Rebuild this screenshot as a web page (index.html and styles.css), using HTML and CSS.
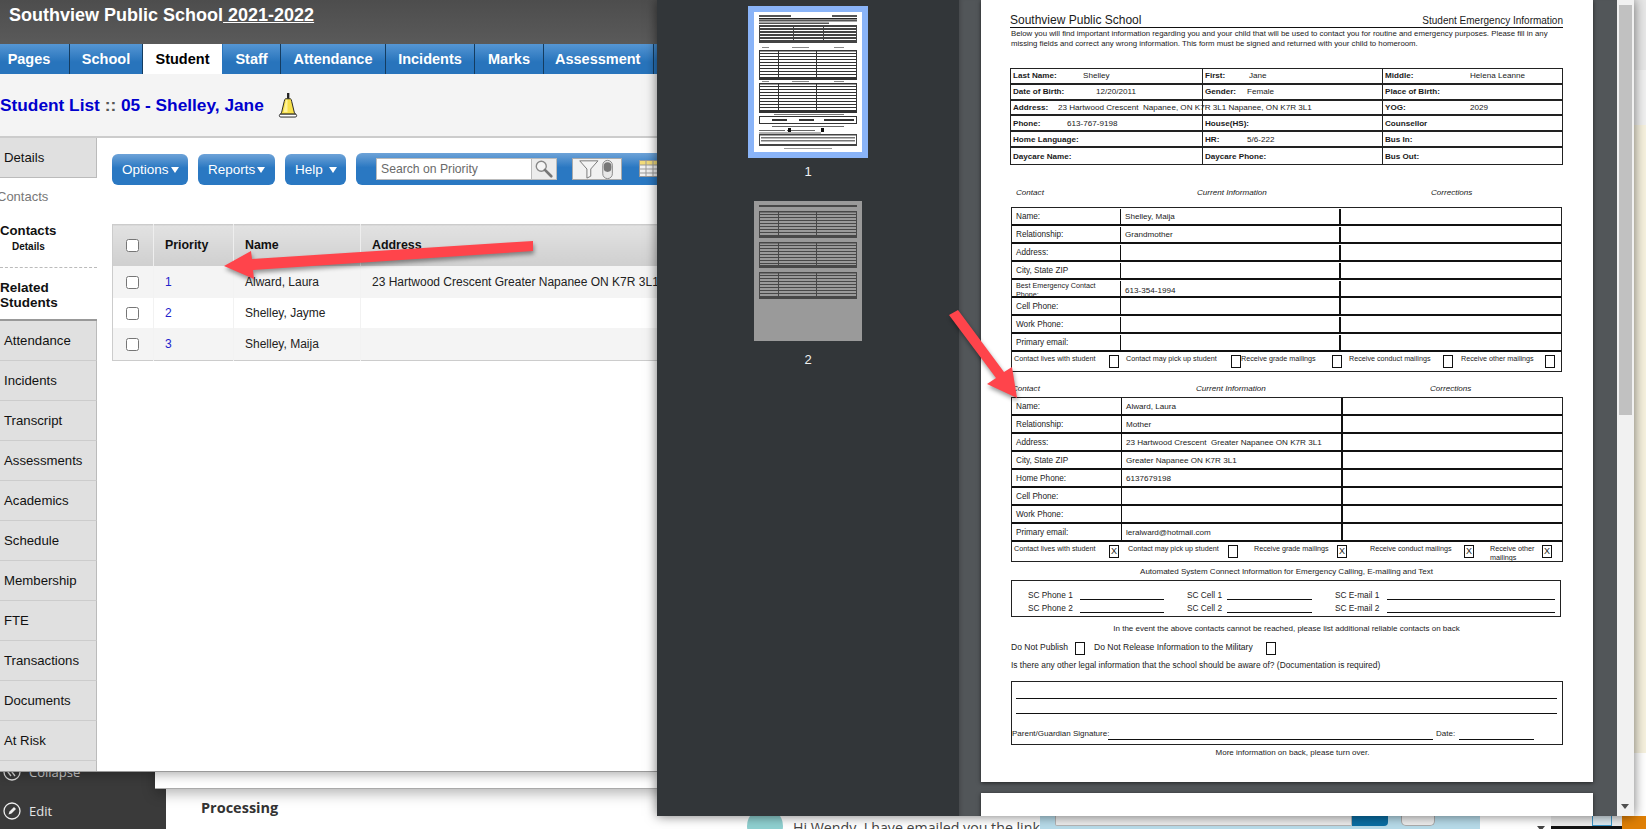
FILE: index.html
```html
<!DOCTYPE html>
<html lang="en">
<head>
<meta charset="utf-8">
<title>Student Emergency Information</title>
<link rel="stylesheet" href="styles.css">
</head>
<body>
<div class="desktop">

  <div class="back-app">
    <aside class="back-side">
      <div class="back-link back-collapse">
        <svg class="back-ico" viewBox="0 0 18 18"><circle cx="9" cy="9" r="8" fill="none" stroke="#ddd" stroke-width="1.3"/><path d="M8 5 5 9l3 4M12 5 9 9l3 4" fill="none" stroke="#ddd" stroke-width="1.3"/></svg>
        <span>Collapse</span>
      </div>
      <div class="back-link back-edit">
        <svg class="back-ico" viewBox="0 0 18 18"><circle cx="9" cy="9" r="8" fill="none" stroke="#eee" stroke-width="1.3"/><path d="M5.5 12.5 6.5 9.5 11 5l2 2-4.5 4.5z" fill="#eee"/></svg>
        <span>Edit</span>
      </div>
    </aside>
    <div class="back-main">
      <div class="back-heading">Processing</div>
    </div>
  </div>

  <div class="back-sheet"></div>

  <div class="chat-strip">
    <div class="chat-msg">
      <span class="chat-avatar"></span>
      <span class="chat-text">Hi Wendy, I have emailed you the link</span>
    </div>
    <div class="chat-compose">
      <span class="chat-input"></span>
      <span class="chat-send"></span>
      <span class="chat-attach"></span>
    </div>
    <div class="chat-end"><span class="chat-arrow"></span></div>
    <div class="chat-task"><span class="chat-taskicon"></span></div>
    <div class="chat-orange"></div>
  </div>

  <div class="right-strip">
    <div class="strip-a"></div>
    <div class="strip-b"></div>
    <div class="strip-c"></div>
    <div class="strip-d"></div>
  </div>

  <section class="sis">
    <header class="sis-head">
      <span class="sis-school">Southview Public School<u> 2021-2022</u></span>
    </header>
    <nav class="sis-nav">
      <a class="tab tab-first">Pages</a>
      <a class="tab">School</a>
      <a class="tab tab-on">Student</a>
      <a class="tab">Staff</a>
      <a class="tab">Attendance</a>
      <a class="tab">Incidents</a>
      <a class="tab">Marks</a>
      <a class="tab">Assessment</a>
    </nav>
    <div class="sis-title">
      <h1>Student List <span class="crumb">::</span> 05 - Shelley, Jane</h1>
      <svg class="bell" viewBox="0 0 20 26">
        <rect x="9" y="0" width="2.4" height="6" fill="#222"/>
        <path d="M7.5 6h5q1 0 1.4 3l2.6 11q.4 1.500 1.500 2H2q1-.5 1.400-2L6 9q.5-3 1.500-3z" fill="#f7e04b" stroke="#222" stroke-width="1"/>
        <path d="M8 7 5.500 20h4V7z" fill="#fff39a"/>
        <rect x="1" y="22" width="18" height="3" rx="1.500" fill="#fff" stroke="#222"/>
      </svg>
    </div>
    <div class="sis-body">
      <aside class="side">
        <div class="side-tab side-tab-top">Details</div>
        <div class="side-group">Contacts</div>
        <div class="side-sel">
          <div class="side-sel-name">Contacts</div>
          <div class="side-sel-sub">Details</div>
        </div>
        <div class="side-related">Related<br>Students</div>
        <div class="side-tab">Attendance</div>
        <div class="side-tab">Incidents</div>
        <div class="side-tab">Transcript</div>
        <div class="side-tab">Assessments</div>
        <div class="side-tab">Academics</div>
        <div class="side-tab">Schedule</div>
        <div class="side-tab">Membership</div>
        <div class="side-tab">FTE</div>
        <div class="side-tab">Transactions</div>
        <div class="side-tab">Documents</div>
        <div class="side-tab">At Risk</div>
        <div class="side-tab"></div>
      </aside>
      <main class="content">
        <div class="toolbar">
          <button class="tbtn tbtn-options">Options<i class="caret"></i></button>
          <button class="tbtn tbtn-reports">Reports<i class="caret"></i></button>
          <button class="tbtn tbtn-help">Help<i class="caret caret-gap"></i></button>
          <div class="tools">
            <span class="search-input">Search on Priority</span>
            <span class="search-btn">
              <svg viewBox="0 0 24 22" class="ico-search"><circle cx="9" cy="8" r="5.500" fill="#f5f5f5" stroke="#888" stroke-width="1.500"/><path d="m13 12 7 7" stroke="#777" stroke-width="3" stroke-linecap="round"/></svg>
            </span>
            <span class="filter-btn">
              <svg viewBox="0 0 50 20" class="ico-filter"><path d="M7 1.500h19l-7.500 8.500v7.500l-4 2v-9.500z" fill="#f4f4f4" stroke="#777"/><rect x="31" y="1" width="10" height="19" rx="5" fill="#e8e8e8" stroke="#888"/><rect x="32" y="3" width="8" height="10" rx="4" fill="#777"/></svg>
            </span>
            <svg viewBox="0 0 22 18" class="ico-grid"><rect x=".5" y=".5" width="21" height="16" fill="#f2f2f2" stroke="#999"/><rect x="1" y="1" width="20" height="4" fill="#f3dc7a"/><path d="M1 5h20M1 9h20M1 13h20M7 1v15M14 1v15" stroke="#999" fill="none"/></svg>
          </div>
        </div>
        <table class="grid">
          <thead>
            <tr>
              <th class="col-check"><input type="checkbox"></th>
              <th class="col-pri">Priority</th>
              <th class="col-name">Name</th>
              <th>Address</th>
            </tr>
          </thead>
          <tbody>
            <tr class="r1 alt">
              <td class="col-check"><input type="checkbox"></td>
              <td class="link">1</td>
              <td>Alward, Laura</td>
              <td class="nowrap">23 Hartwood Crescent Greater Napanee ON K7R 3L1</td>
            </tr>
            <tr class="r2">
              <td class="col-check"><input type="checkbox"></td>
              <td class="link">2</td>
              <td>Shelley, Jayme</td>
              <td></td>
            </tr>
            <tr class="r3 alt">
              <td class="col-check"><input type="checkbox"></td>
              <td class="link">3</td>
              <td>Shelley, Maija</td>
              <td></td>
            </tr>
          </tbody>
        </table>
      </main>
    </div>
  </section>

  <section class="viewer">
    <aside class="thumbs">
      <div class="thumb thumb-on">
        <svg class="thumb-page" viewBox="0 0 108 140">
          <rect width="108" height="140" fill="#fff"/>
          <g fill="#555">
            <rect x="5" y="3" width="32" height="2"/><rect x="78" y="3" width="25" height="2"/>
            <rect x="5" y="6" width="98" height="1.500" fill="#222"/>
            <rect x="5" y="8" width="98" height="1.500"/><rect x="5" y="10.500" width="70" height="1.500"/>
          </g>
          <g fill="#444">
            <rect x="5" y="13" width="98" height="2"/><rect x="5" y="16" width="98" height="2"/><rect x="5" y="19" width="98" height="2"/><rect x="5" y="22" width="98" height="2"/><rect x="5" y="25" width="98" height="2"/><rect x="5" y="28" width="98" height="3"/>
            <rect x="5" y="13" width="1" height="18"/><rect x="39" y="13" width="1" height="18"/><rect x="69" y="13" width="1" height="18"/><rect x="102" y="13" width="1" height="18"/>
          </g>
          <g fill="#888"><rect x="8" y="35" width="7" height="1"/><rect x="38" y="35" width="17" height="1"/><rect x="80" y="35" width="10" height="1"/></g>
          <g fill="#333">
            <rect x="5" y="38" width="98" height="1.500"/><rect x="5" y="41" width="98" height="1"/><rect x="5" y="44" width="98" height="1"/><rect x="5" y="47" width="98" height="1"/><rect x="5" y="50" width="98" height="1"/><rect x="5" y="53" width="98" height="1"/><rect x="5" y="56" width="98" height="1"/><rect x="5" y="59" width="98" height="1"/><rect x="5" y="62" width="98" height="1"/><rect x="5" y="65" width="98" height="3"/>
            <rect x="5" y="38" width="1" height="30"/><rect x="24" y="38" width="1" height="27"/><rect x="62" y="38" width="1" height="27"/><rect x="102" y="38" width="1" height="30"/>
          </g>
          <g fill="#888"><rect x="8" y="69" width="7" height="1"/><rect x="38" y="69" width="17" height="1"/><rect x="80" y="69" width="10" height="1"/></g>
          <g fill="#333">
            <rect x="5" y="71" width="98" height="1.500"/><rect x="5" y="74" width="98" height="1"/><rect x="5" y="77" width="98" height="1"/><rect x="5" y="80" width="98" height="1"/><rect x="5" y="83" width="98" height="1"/><rect x="5" y="86" width="98" height="1"/><rect x="5" y="89" width="98" height="1"/><rect x="5" y="92" width="98" height="1"/><rect x="5" y="95" width="98" height="1"/><rect x="5" y="98" width="98" height="3"/>
            <rect x="5" y="71" width="1" height="30"/><rect x="24" y="71" width="1" height="27"/><rect x="62" y="71" width="1" height="27"/><rect x="102" y="71" width="1" height="30"/>
          </g>
          <g fill="#777"><rect x="20" y="102" width="70" height="1"/></g>
          <g fill="#333">
            <rect x="5" y="104" width="98" height="1"/><rect x="5" y="111" width="98" height="1"/><rect x="5" y="104" width="1" height="8"/><rect x="102" y="104" width="1" height="8"/>
            <rect x="18" y="107" width="15" height="2"/><rect x="45" y="107" width="15" height="2"/><rect x="70" y="107" width="30" height="2"/>
          </g>
          <g fill="#666"><rect x="18" y="114" width="72" height="1"/><rect x="5" y="118" width="26" height="1"/><rect x="33" y="118" width="28" height="1"/><rect x="5" y="120.500" width="62" height="1"/></g>
          <rect x="34" y="116" width="3" height="4" fill="#111"/><rect x="67" y="116" width="3" height="4" fill="#111"/>
          <g fill="#444">
            <rect x="5" y="122" width="98" height="1.500"/><rect x="7" y="125" width="94" height="1.500" fill="#777"/><rect x="7" y="128" width="94" height="1.500" fill="#777"/><rect x="5" y="132" width="98" height="2"/><rect x="5" y="122" width="1" height="12"/><rect x="102" y="122" width="1" height="12"/>
            <rect x="30" y="136" width="48" height="1" fill="#999"/>
          </g>
        </svg>
      </div>
      <div class="thumb-num thumb-num-1">1</div>
      <div class="thumb">
        <svg class="thumb-page" viewBox="0 0 108 140">
          <rect width="108" height="140" fill="#9a9a9a"/>
          <g fill="#484848">
            <rect x="5" y="4" width="98" height="2"/>
            <rect x="5" y="10" width="98" height="1.500"/><rect x="5" y="13" width="98" height="1"/><rect x="5" y="16" width="98" height="1"/><rect x="5" y="19" width="98" height="1"/><rect x="5" y="22" width="98" height="1"/><rect x="5" y="25" width="98" height="1"/><rect x="5" y="28" width="98" height="1"/><rect x="5" y="31" width="98" height="1"/><rect x="5" y="34" width="98" height="3"/>
            <rect x="5" y="10" width="1" height="27"/><rect x="24" y="10" width="1" height="24"/><rect x="62" y="10" width="1" height="24"/><rect x="102" y="10" width="1" height="27"/>
            <rect x="5" y="41" width="98" height="1.500"/><rect x="5" y="44" width="98" height="1"/><rect x="5" y="47" width="98" height="1"/><rect x="5" y="50" width="98" height="1"/><rect x="5" y="53" width="98" height="1"/><rect x="5" y="56" width="98" height="1"/><rect x="5" y="59" width="98" height="1"/><rect x="5" y="62" width="98" height="1"/><rect x="5" y="64" width="98" height="3"/>
            <rect x="5" y="41" width="1" height="26"/><rect x="24" y="41" width="1" height="23"/><rect x="62" y="41" width="1" height="23"/><rect x="102" y="41" width="1" height="26"/>
            <rect x="5" y="71" width="98" height="1.500"/><rect x="5" y="74" width="98" height="1"/><rect x="5" y="77" width="98" height="1"/><rect x="5" y="80" width="98" height="1"/><rect x="5" y="83" width="98" height="1"/><rect x="5" y="86" width="98" height="1"/><rect x="5" y="89" width="98" height="1"/><rect x="5" y="92" width="98" height="1"/><rect x="5" y="95" width="98" height="3"/>
            <rect x="5" y="71" width="1" height="27"/><rect x="24" y="71" width="1" height="24"/><rect x="62" y="71" width="1" height="24"/><rect x="102" y="71" width="1" height="27"/>
          </g>
        </svg>
      </div>
      <div class="thumb-num">2</div>
    </aside>

    <div class="doc-area">
      <article class="page">
        <div class="doc-head">
          <span class="doc-school">Southview Public School</span>
          <span class="doc-form">Student Emergency Information</span>
        </div>
        <p class="doc-intro">Below you will find important information regarding you and your child that will be used to contact you for routine and emergency purposes. Please fill in any missing fields and correct any wrong information. This form must be signed and returned with your child to homeroom.</p>

        <div class="info">
          <div class="info-row">
            <div class="cell"><b class="k70">Last Name:</b><span>Shelley</span></div>
            <div class="cell"><b class="k44">First:</b><span>Jane</span></div>
            <div class="cell"><b class="k85">Middle:</b><span>Helena Leanne</span></div>
          </div>
          <div class="info-row">
            <div class="cell"><b class="k83">Date of Birth:</b><span>12/20/2011</span></div>
            <div class="cell"><b class="k42">Gender:</b><span>Female</span></div>
            <div class="cell"><b class="k85">Place of Birth:</b></div>
          </div>
          <div class="info-row">
            <div class="cell"><b class="k45">Address:</b><span class="pre">23 Hartwood Crescent  Napanee, ON K7R 3L1 Napanee, ON K7R 3L1</span></div>
            <div class="cell cell-empty"></div>
            <div class="cell"><b class="k85">YOG:</b><span>2029</span></div>
          </div>
          <div class="info-row">
            <div class="cell"><b class="k54">Phone:</b><span>613-767-9198</span></div>
            <div class="cell"><b>House(HS):</b></div>
            <div class="cell"><b>Counsellor</b></div>
          </div>
          <div class="info-row">
            <div class="cell"><b>Home Language:</b></div>
            <div class="cell"><b class="k42">HR:</b><span>5/6-222</span></div>
            <div class="cell"><b>Bus In:</b></div>
          </div>
          <div class="info-row">
            <div class="cell"><b>Daycare Name:</b></div>
            <div class="cell"><b>Daycare Phone:</b></div>
            <div class="cell"><b>Bus Out:</b></div>
          </div>
        </div>

        <div class="col-labels col-labels-a"><i>Contact</i><i>Current Information</i><i>Corrections</i></div>
        <div class="contact contact-a">
          <div class="c-row"><span>Name:</span><span>Shelley, Maija</span><span></span></div>
          <div class="c-row"><span>Relationship:</span><span>Grandmother</span><span></span></div>
          <div class="c-row"><span>Address:</span><span></span><span></span></div>
          <div class="c-row"><span>City, State ZIP</span><span></span><span></span></div>
          <div class="c-row"><span class="two-line">Best Emergency Contact Phone:</span><span>613-354-1994</span><span></span></div>
          <div class="c-row"><span>Cell Phone:</span><span></span><span></span></div>
          <div class="c-row"><span>Work Phone:</span><span></span><span></span></div>
          <div class="c-row"><span>Primary email:</span><span></span><span></span></div>
          <div class="c-checks">
            <div class="seg"><span>Contact lives with student</span><i class="box"></i></div>
            <div class="seg"><span>Contact may pick up student</span><i class="box"></i></div>
            <div class="seg"><span>Receive grade mailings</span><i class="box"></i></div>
            <div class="seg"><span>Receive conduct mailings</span><i class="box"></i></div>
            <div class="seg"><span>Receive other mailings</span><i class="box"></i></div>
          </div>
        </div>

        <div class="col-labels col-labels-b"><i>Contact</i><i>Current Information</i><i>Corrections</i></div>
        <div class="contact contact-b">
          <div class="c-row"><span>Name:</span><span>Alward, Laura</span><span></span></div>
          <div class="c-row"><span>Relationship:</span><span>Mother</span><span></span></div>
          <div class="c-row"><span>Address:</span><span class="c-pre">23 Hartwood Crescent  Greater Napanee ON K7R 3L1</span><span></span></div>
          <div class="c-row"><span>City, State ZIP</span><span>Greater Napanee ON K7R 3L1</span><span></span></div>
          <div class="c-row"><span>Home Phone:</span><span>6137679198</span><span></span></div>
          <div class="c-row"><span>Cell Phone:</span><span></span><span></span></div>
          <div class="c-row"><span>Work Phone:</span><span></span><span></span></div>
          <div class="c-row"><span>Primary email:</span><span>leralward@hotmail.com</span><span></span></div>
          <div class="c-checks">
            <div class="seg"><span>Contact lives with student</span><i class="box">X</i></div>
            <div class="seg"><span>Contact may pick up student</span><i class="box"></i></div>
            <div class="seg"><span>Receive grade mailings</span><i class="box">X</i></div>
            <div class="seg"><span>Receive conduct mailings</span><i class="box">X</i></div>
            <div class="seg"><span>Receive other<br>mailings</span><i class="box">X</i></div>
          </div>
        </div>

        <div class="doc-center doc-auto">Automated System Connect Information for Emergency Calling, E-mailing and Text</div>
        <div class="sc">
          <div class="sc-item"><span class="sc-l">SC Phone 1</span><span class="rule"></span></div>
          <div class="sc-item"><span class="sc-m">SC Cell 1</span><span class="rule"></span></div>
          <div class="sc-item sc-last"><span class="sc-l">SC E-mail 1</span><span class="rule"></span></div>
          <div class="sc-item"><span class="sc-l">SC Phone 2</span><span class="rule"></span></div>
          <div class="sc-item"><span class="sc-m">SC Cell 2</span><span class="rule"></span></div>
          <div class="sc-item sc-last"><span class="sc-l">SC E-mail 2</span><span class="rule"></span></div>
        </div>
        <div class="doc-center doc-event">In the event the above contacts cannot be reached, please list additional reliable contacts on back</div>
        <div class="publish">
          <span class="pub-a">Do Not Publish</span><i class="box box-tall"></i>
          <span class="pub-b">Do Not Release Information to the Military</span><i class="box box-tall"></i>
        </div>
        <div class="legal">Is there any other legal information that the school should be aware of? (Documentation is required)</div>
        <div class="sign">
          <div class="sign-line"></div>
          <div class="sign-line sign-line-2"></div>
          <div class="sign-foot">
            <span class="sign-l">Parent/Guardian Signature:</span><span class="rule rule-sig"></span>
            <span class="sign-d">Date:</span><span class="rule rule-date"></span>
          </div>
        </div>
        <div class="doc-center doc-more">More information on back, please turn over.</div>
      </article>
      <article class="page page-next"></article>
    </div>

    <div class="scroller">
      <div class="scroller-thumb"></div>
      <span class="scroller-down"></span>
    </div>
  </section>

  <svg class="arrows" viewBox="0 0 1646 829">
    <polygon points="533,241 533,251 253,270 254,279 224,266 251,251 252,259"/>
    <polygon points="949,315 958,310 1004,372 1012,367 1017,398 987,384 996,378"/>
  </svg>
</div>
</body>
</html>
```
FILE: styles.css
```css
* { box-sizing: border-box; }
html, body { margin: 0; padding: 0; }
body { font-family: "Liberation Sans", Arial, sans-serif; background: #fff; overflow: hidden; }

.desktop { position: relative; width: 1646px; height: 829px; overflow: hidden; background: #fff; }

/* rear application */
.back-app { position: absolute; inset: 0; display: flex; font-family: "Open Sans", sans-serif; }
.back-side { width: 166px; background: #3a3a3a; color: #e4e4e4; font-size: 13px; position: relative; }
.back-link { position: absolute; left: 3px; display: flex; align-items: center; gap: 8px; }
.back-collapse { top: 763px; color: #cfcfcf; }
.back-edit { top: 802px; }
.back-ico { width: 18px; height: 18px; }
.back-main { flex: 1; padding: 798px 0 0 35px; }
.back-heading { font-weight: 700; font-size: 14.5px; line-height: 20px; color: #333; }

.back-sheet { position: absolute; left: 155px; top: 700px; width: 520px; height: 89px; background: #fff; border-bottom: 1px solid #aaa; box-shadow: 0 5px 12px rgba(0,0,0,.28); }

/* strip below the viewer */
.chat-strip { position: absolute; left: 657px; top: 816px; right: 0; height: 13px; display: flex; font-family: "Open Sans", sans-serif; }
.chat-msg { position: relative; width: 383px; height: 13px; overflow: hidden; background: #fff; }
.chat-avatar { position: absolute; left: 90px; top: -8px; width: 36px; height: 36px; border-radius: 50%; background: #8fd0d0; }
.chat-text { position: absolute; left: 136px; top: 3px; font-size: 14.2px; line-height: 18px; white-space: nowrap; color: #444; }
.chat-compose { width: 440px; background: #b7dbe9; display: flex; align-items: flex-start; padding-left: 15px; }
.chat-input { width: 297px; height: 10px; background: #ececec; border: 1px solid #b4b4b4; border-top: 0; border-radius: 0 0 2px 2px; }
.chat-send { width: 36px; height: 10px; background: #0a6ea3; border-radius: 0 0 4px 0; }
.chat-attach { width: 34px; height: 10px; margin-left: 13px; background: #eee; border: 1px solid #aaa; border-top: 0; border-radius: 0 0 5px 5px; }
.chat-end { width: 71px; background: #fff; position: relative; }
.chat-arrow { position: absolute; left: 57px; top: 10px; border: 4px solid transparent; border-top: 5px solid #444; }
.chat-task { width: 71px; background: #ececec; position: relative; border-bottom: 3px solid #111; }
.chat-taskicon { position: absolute; left: 41px; top: 0; width: 20px; height: 10px; border: 1px solid #3a96c8; border-top: 0; background: #dce9f0; }
.chat-orange { flex: 1; background: #df7f05; }

.right-strip { position: absolute; left: 1634px; top: 0; width: 12px; height: 816px; display: flex; flex-direction: column; }
.strip-a { height: 70px; background: #e7e7e7; }
.strip-b { height: 55px; background: #f0f0f0; }
.strip-c { height: 628px; background: #f6f1de; }
.strip-d { height: 36px; background: #fff; }

/* front school app */
.sis { position: absolute; left: 0; top: 0; width: 657px; height: 772px; background: #fff; overflow: hidden; border-bottom: 1px solid #999; box-shadow: 0 3px 10px rgba(0,0,0,.3); }
.sis-head { height: 44px; padding: 3px 0 0 9px; background: linear-gradient(#4d4d4d, #5a5a5a); color: #fff; }
.sis-school { font-size: 18px; font-weight: 700; line-height: 24px; white-space: pre; }
.sis-nav { height: 30px; display: grid; grid-template-columns: 70px 73px 80px 58px 105px 89px 69px 1fr; background: linear-gradient(#4a8fd0, #2874bc 55%); }
.tab { display: flex; align-items: center; justify-content: center; font-size: 14.5px; font-weight: 700; color: #fff; border-right: 1px solid #143c60; background: linear-gradient(#5596d4, #2874bc 60%); }
.tab-first { padding-right: 11px; }
.tab:last-child { justify-content: flex-start; padding-left: 11px; width: 110px; }
.tab-on { background: #fff; color: #000; border-right: 1px solid #2874bc; }

.sis-title { height: 64px; display: flex; align-items: center; gap: 14px; background: #f4f4f4; border-bottom: 2px solid #ccc; }
.sis-title h1 { margin: 0; font-size: 17.3px; font-weight: 700; color: #0000cd; white-space: nowrap; }
.crumb { color: #555; }
.bell { width: 20px; height: 25px; }

.sis-body { display: flex; height: 634px; }
.side { width: 97px; flex: none; font-size: 13.2px; color: #111; }
.side-tab { height: 40px; padding-left: 4px; display: flex; align-items: center; background: #e0e0e0; border-right: 1px solid #bbb; border-bottom: 1px solid #ccc; }
.side-tab-top { height: 40px; border-bottom: 1px solid #bbb; margin-top: 0; }
.side-group { height: 38px; line-height: 37px; text-indent: -3px; color: #777; font-size: 13px; }
.side-sel { height: 52px; padding-top: 6px; border-bottom: 1px dashed #bbb; }
.side-sel-name { font-weight: 700; line-height: 18px; }
.side-sel-sub { font-size: 10px; font-weight: 700; padding-left: 12px; line-height: 14px; }
.side-related { height: 53px; font-weight: 700; font-size: 13.5px; line-height: 15px; padding-top: 12px; border-bottom: 2px solid #999; }

.content { flex: 1; padding: 16px 0 0 15px; min-width: 0; }
.toolbar { display: flex; gap: 10px; height: 31px; white-space: nowrap; }
.tbtn { flex: none; height: 31px; padding: 0 0 0 10px; border: 0; border-radius: 6px; color: #fff; font: 13.500px "Liberation Sans", Arial, sans-serif; text-align: left; background: linear-gradient(#6ea3d8, #2a78c2 45%); display: flex; align-items: center; }
.tbtn-options { width: 76px; }
.tbtn-reports { width: 77px; }
.tbtn-help { width: 61px; }
.caret { width: 0; height: 0; margin-left: 2px; border: 4.500px solid transparent; border-top: 6px solid #fff; border-bottom: 0; }
.caret-gap { margin-left: 6px; }
.tools { flex: none; width: 320px; height: 32px; margin-top: -1px; padding: 5px 0 0 20px; border-radius: 6px 0 0 6px; display: flex; align-items: flex-start; background: linear-gradient(#6ea3d8, #2a78c2 45%); }
.search-input { width: 156px; height: 22px; background: #fff; border: 1px solid #bbb; color: #6a6a6a; font-size: 12.2px; line-height: 20px; padding-left: 4px; }
.search-btn { width: 25px; height: 22px; background: #ececec; border: 1px solid #bbb; border-left: 0; }
.ico-search { display: block; width: 24px; height: 20px; }
.filter-btn { width: 50px; height: 22px; margin-left: 15px; background: #f1f1f1; border: 1px solid #aaa; }
.ico-filter { display: block; width: 48px; height: 20px; }
.ico-grid { width: 22px; height: 18px; margin: 2px 0 0 17px; flex: none; }

.grid { margin-top: 39px; width: 560px; table-layout: fixed; border-collapse: collapse; font-size: 12px; color: #222; border: 1px solid #ccc; border-right: 0; }
.grid th { height: 41px; text-align: left; font-size: 12.4px; font-weight: 700; color: #111; padding: 0 0 0 11px; background: linear-gradient(#e2e2e2, #cfcfcf); border-left: 1px solid #eee; }
.grid td { padding: 0 0 0 11px; border-left: 1px solid #f2f2f2; }
.grid .col-check { width: 41px; padding: 0; text-align: center; border-left: 0; }
.grid input { margin: 0; vertical-align: middle; position: relative; left: -1px; }
.col-pri { width: 80px; }
.col-name { width: 127px; }
.r1 { height: 32px; }
.r2 { height: 30px; }
.r3 { height: 33px; }
.alt { background: #f4f4f4; }
.link { color: #2222cc; }
.nowrap { white-space: nowrap; }

/* PDF viewer */
.viewer { position: absolute; left: 657px; top: 0; width: 977px; height: 816px; display: flex; box-shadow: 0 0 11px rgba(0,0,0,.55); }
.thumbs { width: 302px; flex: none; background: #323639; padding: 6px 0 0 97px; }
.thumb { width: 108px; height: 140px; }
.thumb-on { width: 120px; height: 152px; margin-left: -6px; border: 6px solid #8ab4f8; }
.thumb-page { display: block; width: 108px; height: 140px; filter: blur(.7px); }
.thumb-num { width: 108px; text-align: center; color: #f1f1f1; font-size: 13px; line-height: 16px; margin-top: 11px; height: 33px; }
.thumb-num-1 { margin-top: 6px; height: 37px; }
.doc-area { width: 658px; flex: none; background: #525659; padding: 0 24px 0 22px; overflow: hidden; box-shadow: inset 4px 0 4px -3px rgba(0,0,0,.2); }
.page { height: 782px; padding: 12px 30px 0 29px; background: #fff; color: #1a1a1a; font-size: 8.300px; box-shadow: 0 1px 4px rgba(0,0,0,.6); }
.page-next { height: 40px; margin-top: 11px; padding: 0; }
.scroller { width: 17px; flex: none; background: #f1f1f1; padding: 5px 2px 0; position: relative; }
.scroller-thumb { height: 410px; background: #c1c1c1; }
.scroller-down { position: absolute; left: 4px; top: 804px; border: 4px solid transparent; border-top: 5px solid #505050; border-bottom: 0; }

.doc-head { display: flex; justify-content: space-between; align-items: flex-end; height: 16px; border-bottom: 1px solid #111; white-space: nowrap; }
.doc-school { font-size: 12px; line-height: 14px; }
.doc-form { font-size: 10px; line-height: 12px; }
.doc-intro { margin: 0; height: 40px; padding: 1px 0 0 1px; font-size: 7.800px; line-height: 9.500px; }

.info { height: 97px; border: 1px solid #222; display: grid; grid-template-rows: repeat(6, 1fr); }
.info-row { display: grid; grid-template-columns: 192px 180px 1fr; border-bottom: 2px solid #222; }
.info-row:last-child { border-bottom: 0; }
.cell { display: flex; align-items: center; padding-left: 2px; border-right: 1px solid #222; white-space: nowrap; font-size: 8.100px; min-width: 0; }
.cell:last-child { border-right: 0; }
.cell-empty { border-right: 1px solid #222; }
.cell b { flex: none; }
.k70 { width: 70px; } .k44 { width: 44px; } .k85 { width: 85px; } .k83 { width: 83px; }
.k42 { width: 42px; } .k45 { width: 45px; } .k54 { width: 54px; }
.pre { white-space: pre; }

.col-labels { position: relative; font-size: 8.100px; line-height: 10px; display: grid; padding-left: 6px; }
.col-labels-a { height: 42px; padding-top: 23px; grid-template-columns: 181px 234px 1fr; }
.col-labels-b { height: 25px; padding-top: 12px; padding-left: 2px; grid-template-columns: 184px 234px 1fr; }

.contact { margin-left: 1px; border: 1px solid #222; }
.contact-a { height: 165px; width: 551px; }
.contact-b { height: 165px; width: 552px; }
.c-row { height: 18px; display: grid; grid-template-columns: 109px 220px 1fr; border-bottom: 2px solid #111; font-size: 8.200px; }
.contact-a .c-row { padding-top: 1px; }
.contact-b .c-row { grid-template-columns: 110px 221px 1fr; }
.contact-b .c-row:last-of-type, .contact-a .c-row:last-of-type { height: 19px; }
.c-row > span { display: flex; align-items: center; padding-left: 4px; border-right: 1px solid #111; white-space: nowrap; }
.c-row > span:nth-child(2) { border-right-width: 2px; font-size: 8.100px; }
.c-row > span:last-child { border-right: 0; }
.c-row > .c-pre { white-space: pre; }
.c-row > .two-line { white-space: normal; font-size: 7.200px; line-height: 9px; }
.c-checks { height: 19px; display: grid; font-size: 7.200px; line-height: 9px; padding-left: 2px; }
.contact-a .c-checks { grid-template-columns: 112px 115px 108px 112px 1fr; }
.contact-b .c-checks { grid-template-columns: 114px 126px 116px 120px 1fr; }
.seg { display: flex; justify-content: space-between; align-items: flex-start; padding-top: 2px; padding-right: 7px; white-space: nowrap; }
.contact-a .seg:nth-child(2) { padding-right: 0; }
.contact-a .seg:nth-child(4) { padding-right: 8px; }
.contact-a .seg:nth-child(5) { padding-right: 6px; }
.contact-b .seg:nth-child(1) { padding-right: 9px; }
.contact-b .seg:nth-child(2) { padding-right: 16px; }
.contact-b .seg:nth-child(3) { padding-right: 23px; }
.contact-b .seg:nth-child(4) { padding-right: 16px; }
.contact-b .seg:nth-child(5) { padding-right: 10px; }
.box { display: block; width: 10px; height: 13px; margin-top: 1px; border: 1.500px solid #111; font-style: normal; font-size: 9px; line-height: 11px; text-align: center; flex: none; background: #fff; }

.doc-center { text-align: center; font-size: 8px; white-space: nowrap; }
.doc-auto { height: 18px; line-height: 19px; }
.doc-event { height: 24px; line-height: 24px; font-size: 8px; }
.doc-more { height: 16px; line-height: 16px; padding-left: 12px; }

.sc { margin-left: 1px; width: 550px; height: 37px; border: 1px solid #222; padding: 9px 5px 0 16px; display: grid; grid-template-columns: 159px 148px 1fr; grid-template-rows: 13px 13px; font-size: 8.300px; }
.sc-item { display: flex; padding-right: 23px; }
.sc-last { padding-right: 0; }
.sc-l { width: 52px; flex: none; white-space: nowrap; }
.sc-m { width: 40px; flex: none; white-space: nowrap; }
.rule { flex: 1; height: 10px; border-bottom: 1px solid #111; }

.publish { height: 14px; display: flex; align-items: flex-start; white-space: nowrap; padding-left: 1px; font-size: 8.550px; line-height: 12px; }
.pub-a { width: 64px; flex: none; }
.pub-b { width: 172px; margin-left: 9px; flex: none; }
.box-tall { margin-top: 1px; width: 10px; height: 13px; }
.legal { height: 26px; line-height: 21px; padding-left: 1px; font-size: 8.400px; white-space: nowrap; }
.sign { margin-left: 1px; height: 64px; width: 552px; border: 1px solid #222; padding: 16px 5px 0 4px; font-size: 8px; }
.sign-line { height: 1px; background: #111; }
.sign-line-2 { margin-top: 14px; }
.sign-foot { display: flex; margin: 15px -5px 0 -4px; align-items: flex-start; }
.sign-l { width: 96px; white-space: nowrap; flex: none; }
.rule-sig { flex: none; width: 325px; height: 11px; }
.sign-d { width: 23px; margin-left: 3px; flex: none; }
.rule-date { flex: none; width: 75px; height: 11px; }

.arrows { position: absolute; left: 0; top: 0; width: 1646px; height: 829px; pointer-events: none; }
.arrows polygon { fill: #ff444b; filter: drop-shadow(1px 3px 2px rgba(0,0,0,.4)); }
```
